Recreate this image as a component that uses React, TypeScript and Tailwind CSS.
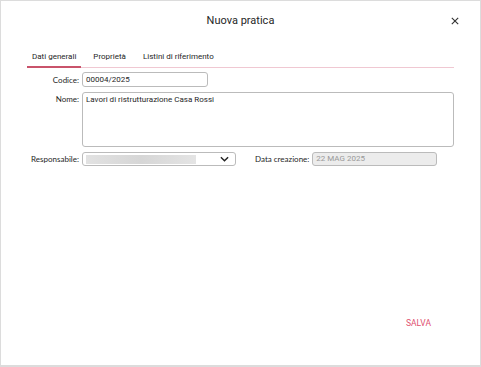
const App = () => {
  return (
    <div className="w-[481px] h-[367px] bg-white border border-[#dcdcdc] border-b-2 font-['Roboto',sans-serif] text-[#262626] flex flex-col">
      {/* Header */}
      <div className="relative h-[40px] flex items-center justify-center">
        <span className="text-[11px]">Nuova pratica</span>
        <button className="absolute right-[18px] top-[13px] w-[14px] h-[14px] flex items-center justify-center">
          <svg width="8" height="8" viewBox="0 0 10 10" stroke="#333" strokeWidth="1.4">
            <path d="M1 1 L9 9 M9 1 L1 9" />
          </svg>
        </button>
      </div>

      {/* Tabs */}
      <div className="mx-[26px] mt-[11px] flex gap-[7px] border-b border-[#f0c8d2] text-[8px] leading-[10px]">
        <div className="px-[5px] pb-[4px] border-b-2 border-[#c9536b] -mb-px">Dati generali</div>
        <div className="px-[5px] pb-[4px]">Proprietà</div>
        <div className="px-[5px] pb-[4px]">Listini di riferimento</div>
      </div>

      {/* Form */}
      <div className="mx-[26px] mt-[4px] flex flex-col text-[8px] font-['Lato',sans-serif]">
        <div className="flex items-center">
          <label className="w-[55px] text-right pr-[3px]">Codice:</label>
          <div className="w-[126px] h-[15px] border border-[#bbb] rounded-[3px] px-[3px] flex items-center font-['Roboto',sans-serif]">
            00004/2025
          </div>
        </div>
        <div className="flex items-start mt-[5px]">
          <label className="w-[55px] text-right pr-[3px] pt-[1px]">Nome:</label>
          <div className="flex-1 h-[55px] border border-[#bbb] rounded-[3px] px-[3px] pt-[1px] font-['Roboto',sans-serif]">
            Lavori di ristrutturazione Casa Rossi
          </div>
        </div>
        <div className="flex items-center mt-[5px]">
          <label className="w-[55px] text-right pr-[3px]">Responsabile:</label>
          <div className="w-[154px] h-[14px] border border-[#bbb] rounded-[3px] px-[3px] flex items-center justify-between">
            <div className="w-[110px] h-[9px] bg-gradient-to-r from-[#e2e2e2] via-[#d6d6d6] to-[#e4e4e4]" />
            <svg width="9" height="6" viewBox="0 0 10 6" fill="none" stroke="#222" strokeWidth="1.6" className="mr-[3px]">
              <path d="M1 1 L5 5 L9 1" />
            </svg>
          </div>
          <label className="ml-[19px] pr-[3px]">Data creazione:</label>
          <div className="w-[125px] h-[14px] border border-[#bbb] rounded-[3px] bg-[#ececec] px-[3px] flex items-center text-[#999] font-['Roboto',sans-serif]">
            22 MAG 2025
          </div>
        </div>
      </div>

      <div className="flex-1" />
      <div className="flex justify-end pr-[49px] pb-[37px]">
        <span className="text-[8.5px] leading-[10px] text-[#e0506f]">SALVA</span>
      </div>
    </div>
  );
};

export default App;
